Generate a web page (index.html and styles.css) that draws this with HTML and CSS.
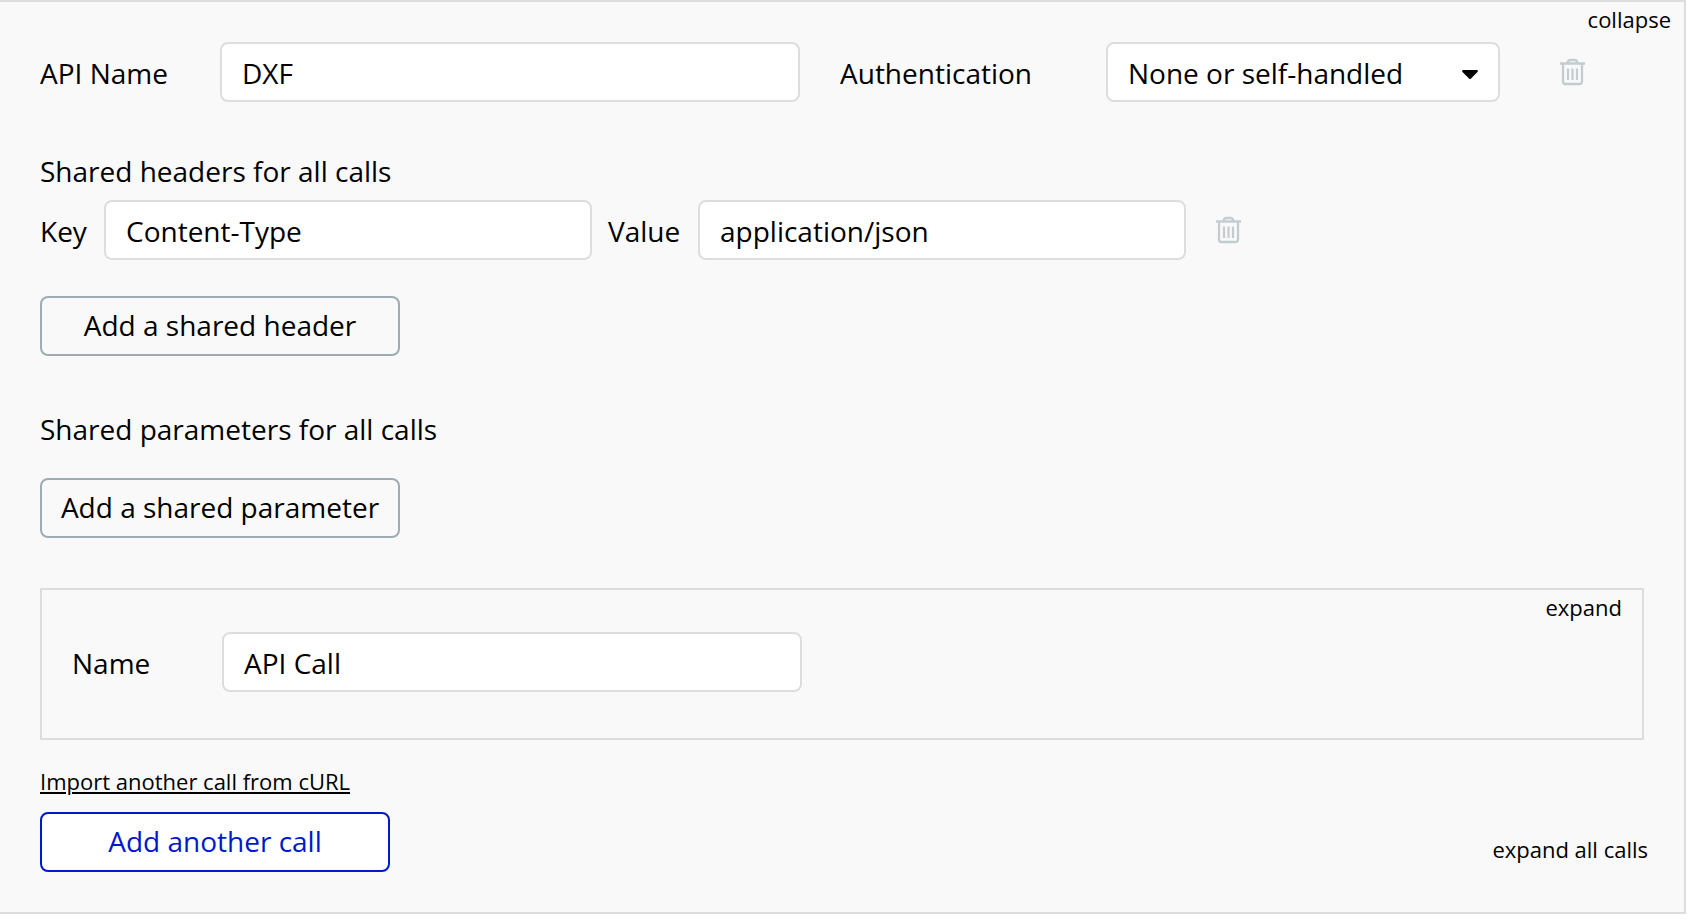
FILE: index.html
```html
<!DOCTYPE html>
<html lang="en">
<head>
<meta charset="utf-8">
<title>API Connector</title>
<link rel="stylesheet" href="styles.css">
</head>
<body>
<svg class="sprite" aria-hidden="true">
  <symbol id="trash" viewBox="0 0 26 28">
    <path d="M0 5.500H25M7.500 5.500V5Q8 2 10.500 2H14.500Q17 2 17.500 5V5.500M3 6V23.500Q3 26 5.500 26H19.500Q22 26 22 23.500V6" fill="none" stroke="currentColor" stroke-width="2.300"/>
    <path d="M8 10.500V22M12.500 10.500V22M17 10.500V22" fill="none" stroke="currentColor" stroke-width="2.200"/>
  </symbol>
</svg>
<main class="panel">
  <div class="corner">
    <button type="button" class="text-button">collapse</button>
  </div>

  <section class="row row-api">
    <label class="label" for="api-name">API Name</label>
    <input class="field" id="api-name" type="text" value="DXF">
    <label class="label label-auth" for="auth">Authentication</label>
    <div class="select">
      <select class="field" id="auth">
        <option>None or self-handled</option>
      </select>
      <svg class="caret" viewBox="0 0 16 10" aria-hidden="true"><path d="M1 0H15Q16.500 0.500 15.500 2L9 8.500Q8 9.500 7 8.500L0.500 2Q-0.500 0.500 1 0Z"/></svg>
    </div>
    <button type="button" class="icon-button icon-button-api" aria-label="Delete API"><svg class="icon"><use href="#trash"/></svg></button>
  </section>

  <section class="headers">
    <h2 class="heading">Shared headers for all calls</h2>
    <div class="row row-header">
      <label class="label" for="header-key">Key</label>
      <input class="field" id="header-key" type="text" value="Content-Type">
      <label class="label label-value" for="header-value">Value</label>
      <input class="field" id="header-value" type="text" value="application/json">
      <button type="button" class="icon-button" aria-label="Delete header"><svg class="icon"><use href="#trash"/></svg></button>
    </div>
    <button type="button" class="button">Add a shared header</button>
  </section>

  <section class="parameters">
    <h2 class="heading">Shared parameters for all calls</h2>
    <button type="button" class="button">Add a shared parameter</button>
  </section>

  <section class="call">
    <div class="corner corner-call">
      <button type="button" class="text-button">expand</button>
    </div>
    <div class="row row-call">
      <label class="label" for="call-name">Name</label>
      <input class="field" id="call-name" type="text" value="API Call">
    </div>
  </section>

  <footer class="footer">
    <div class="footer-actions">
      <a class="link" href="#import">Import another call from cURL</a>
      <button type="button" class="button button-primary">Add another call</button>
    </div>
    <button type="button" class="text-button">expand all calls</button>
  </footer>
</main>
</body>
</html>
```
FILE: styles.css
```css
* {
  box-sizing: border-box;
}

body {
  margin: 0;
  background: #fff;
  color: #000;
  font: 28px/38px "Open Sans", "Noto Sans", sans-serif;
}

button,
input,
select {
  font: inherit;
  color: inherit;
}

button {
  cursor: pointer;
}

.sprite {
  display: none;
}

.panel {
  margin-right: 6px;
  padding-bottom: 40px;
  background: #f9f9f9;
  border: 2px solid #ddd;
  border-left: 0;
}

.corner {
  display: flex;
  justify-content: flex-end;
  height: 40px;
  padding-right: 13px;
}

.corner-call {
  height: 42px;
  padding-right: 20px;
}

.text-button {
  align-self: flex-start;
  padding: 0;
  border: 0;
  background: none;
  font-size: 22px;
  line-height: 34px;
}

.row {
  display: grid;
  align-items: center;
}

.row-api {
  grid-template-columns: 180px minmax(0, 580fr) 306px minmax(0, 394fr) minmax(90px, 144fr);
  margin: 0 40px;
}

.row-header {
  grid-template-columns: 64px minmax(0, 488fr) 106px minmax(0, 488fr) minmax(60px, 458fr);
  margin: 10px 0 36px;
}

.row-call {
  grid-template-columns: 150px minmax(0, 580fr) minmax(0, 840fr);
  padding-left: 30px;
}

.label {
  padding-top: 2px;
}

.label-auth {
  padding-left: 40px;
}

.label-value {
  padding-left: 16px;
}

.field {
  display: block;
  width: 100%;
  height: 60px;
  margin: 0;
  padding: 2px 20px 0;
  border: 2px solid #ddd;
  border-radius: 8px;
  background: #fff;
  appearance: none;
}

.select {
  position: relative;
}

.caret {
  position: absolute;
  top: 28px;
  right: 22px;
  width: 16px;
  height: 10px;
  pointer-events: none;
}

.icon-button {
  justify-self: start;
  display: flex;
  margin-left: 30px;
  padding: 0;
  border: 0;
  background: none;
  color: #c3cdd1;
}

.icon-button-api {
  margin-left: 60px;
}

.icon {
  width: 26px;
  height: 28px;
}

.headers {
  margin: 50px 40px 0;
}

.parameters {
  margin: 54px 40px 0;
}

.heading {
  margin: 0;
  font-size: 28px;
  font-weight: 400;
}

.parameters .heading {
  margin-bottom: 30px;
}

.button {
  display: block;
  width: 360px;
  height: 60px;
  padding: 0 0 2px;
  border: 2px solid #9eacb3;
  border-radius: 8px;
  background: none;
}

.button-primary {
  width: 350px;
  border-color: #0018cc;
  background: #fff;
  color: #0018cc;
}

.call {
  margin: 50px 40px 0;
  padding-bottom: 46px;
  border: 2px solid #ddd;
}

.footer {
  display: flex;
  justify-content: space-between;
  align-items: flex-end;
  margin: 26px 36px 0 40px;
}

.footer > .text-button {
  align-self: flex-end;
  margin-bottom: 6px;
}

.footer-actions {
  display: flex;
  flex-direction: column;
  align-items: flex-start;
  gap: 16px;
}

.link {
  color: inherit;
  font-size: 22px;
  line-height: 30px;
  text-decoration-thickness: 2px;
  text-underline-offset: 2px;
}
```
